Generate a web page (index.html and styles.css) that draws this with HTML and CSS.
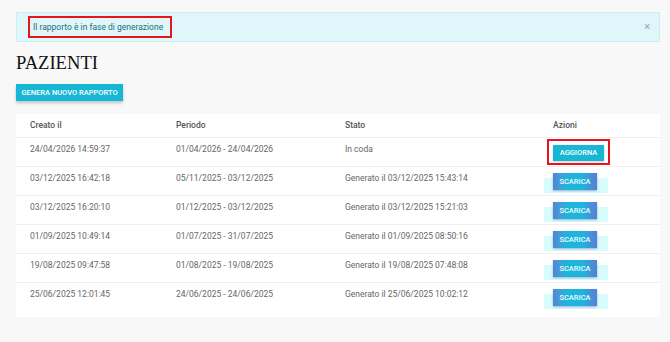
FILE: index.html
```html
<!DOCTYPE html>
<html lang="it">
<head>
<meta charset="utf-8">
<title>Pazienti</title>
<link rel="stylesheet" href="styles.css">
</head>
<body>
<div class="page">
  <div class="alert">
    <span class="alert-text">Il rapporto è in fase di generazione</span>
    <span class="alert-close">×</span>
  </div>
  <h1 class="title">PAZIENTI</h1>
  <button class="btn btn-primary">Genera nuovo rapporto</button>
  <div class="card">
    <table class="table">
      <thead>
        <tr><th class="c1">Creato il</th><th class="c2">Periodo</th><th class="c3">Stato</th><th class="c4">Azioni</th></tr>
      </thead>
      <tbody>
        <tr><td>24/04/2026 14:59:37</td><td>01/04/2026 - 24/04/2026</td><td>In coda</td><td><span class="hl"><button class="btn btn-action">Aggiorna</button></span></td></tr>
        <tr><td>03/12/2025 16:42:18</td><td>05/11/2025 - 03/12/2025</td><td>Generato il 03/12/2025 15:43:14</td><td><span class="glow"><button class="btn btn-dl">Scarica</button></span></td></tr>
        <tr><td>03/12/2025 16:20:10</td><td>01/12/2025 - 03/12/2025</td><td>Generato il 03/12/2025 15:21:03</td><td><span class="glow"><button class="btn btn-dl">Scarica</button></span></td></tr>
        <tr><td>01/09/2025 10:49:14</td><td>01/07/2025 - 31/07/2025</td><td>Generato il 01/09/2025 08:50:16</td><td><span class="glow"><button class="btn btn-dl">Scarica</button></span></td></tr>
        <tr><td>19/08/2025 09:47:58</td><td>01/08/2025 - 19/08/2025</td><td>Generato il 19/08/2025 07:48:08</td><td><span class="glow"><button class="btn btn-dl">Scarica</button></span></td></tr>
        <tr><td>25/06/2025 12:01:45</td><td>24/06/2025 - 24/06/2025</td><td>Generato il 25/06/2025 10:02:12</td><td><span class="glow"><button class="btn btn-dl">Scarica</button></span></td></tr>
      </tbody>
    </table>
  </div>
</div>
</body>
</html>
```
FILE: styles.css
```css
* { box-sizing: border-box; }
html, body { margin: 0; padding: 0; }
body {
  background: #f8f8f8;
  font-family: Roboto, "Liberation Sans", sans-serif;
  width: 670px;
  height: 342px;
  overflow: hidden;
}
.page {
  padding: 12px 10px 0 16px;
}
.alert {
  position: relative;
  height: 30px;
  background: #dff7fa;
  border: 1px solid #cdeff4;
  display: flex;
  align-items: center;
  padding-left: 11px;
}
.alert-text {
  font-size: 8.5px;
  color: #2b6c77;
  border: 2px solid #e8141c;
  padding: 2px 7px 2px 3px;
  line-height: 14px;
}
.alert-close {
  position: absolute;
  right: 9px;
  top: 7px;
  font-size: 11px;
  color: #8aa9ad;
  line-height: 14px;
}
.title {
  font-family: "Liberation Serif", "Times New Roman", serif;
  font-weight: normal;
  font-size: 18.6px;
  line-height: 20px;
  margin: 11px 0 11px 0;
  color: #111;
}
.btn {
  border: 0;
  font-family: Roboto, "Liberation Sans", sans-serif;
  text-transform: uppercase;
  color: #fff;
  font-weight: 500;
  cursor: pointer;
}
.btn-primary {
  display: block;
  background: #17b6d4;
  font-size: 7.5px;
  height: 17px;
  width: 107px;
  padding: 0;
  box-shadow: 0 2px 3px rgba(0,0,0,0.22);
}
.card {
  margin-top: 13px;
  background: #fff;
  padding-bottom: 6px;
}
.table {
  width: 100%;
  border-collapse: collapse;
  font-size: 8.5px;
  color: #666;
}
.table th {
  text-align: left;
  font-weight: 500;
  color: #555;
  height: 23px;
  padding: 0 14px;
  border-bottom: 1px solid #eee;
  font-size: 8.5px;
}
.table td {
  padding: 6px 14px 0 14px;
  height: 29px;
  vertical-align: top;
  line-height: 11px;
  border-bottom: 1px solid #f0f0f0;
}
.table tbody tr:last-child td { border-bottom: 0; }
.c1 { width: 146px; }
.c2 { width: 169px; }
.c3 { width: 208px; }
.table td:last-child { padding-left: 5px; }
.hl {
  display: inline-block;
  border: 2px solid #e8141c;
  padding: 4px 4px 2px 4px;
  margin: -5px 0 0 3px;
}
.btn-action {
  display: block;
  background: #17b6d4;
  font-size: 7.5px;
  height: 16px;
  width: 51px;
  padding: 0;
  box-shadow: 0 1px 2px rgba(0,0,0,0.2);
}
.glow {
  display: inline-block;
  background: linear-gradient(to bottom, transparent 0, transparent 5px, #d6fcfc 5px, #d6fcfc 100%);
  padding: 0 11px 3px 9px;
}
.btn-dl {
  display: block;
  background: linear-gradient(to right, #4f86d6 0, #3fa0da 8px, #1fb4dc 14px, #1fb4dc 30px, #3f98d8 36px, #5480d4 100%);
  font-size: 7.5px;
  height: 17px;
  width: 44px;
  padding: 0;
  color: #e8ffff;
  box-shadow: 0 1px 2px rgba(60,40,120,0.35);
}
```
